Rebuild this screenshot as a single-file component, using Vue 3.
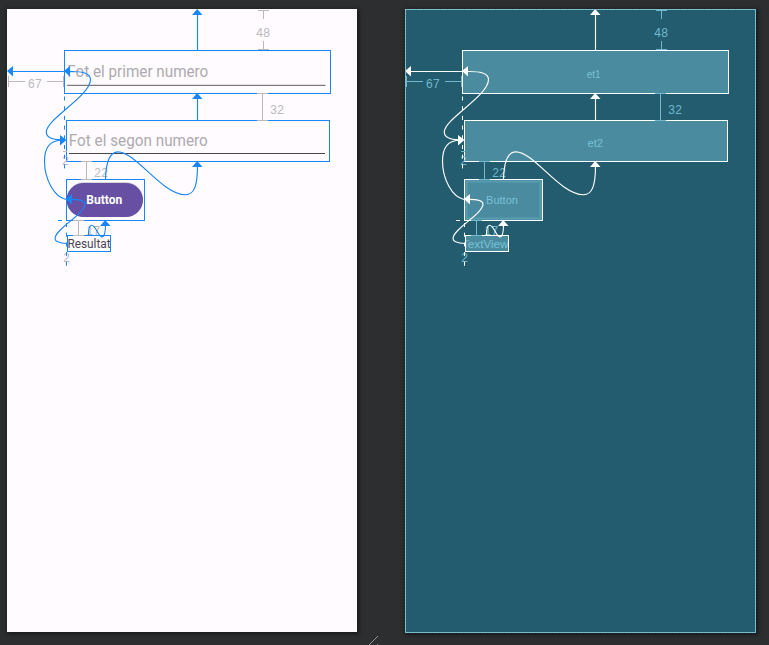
<script setup>
const boards = [
  { kind: 'design', blueprint: false },
  { kind: 'blueprint', blueprint: true },
]

const widgets = [
  { id: 'et1', x: 64, y: 50, w: 266, h: 43, label: 'et1', lx: 188.7, ly: 78, lw: 14 },
  { id: 'et2', x: 66, y: 120, w: 263, h: 41, label: 'et2', lx: 189.5, ly: 147, lw: 15.5 },
  { id: 'button', x: 66, y: 179, w: 78, h: 41, label: 'Button', lx: 88, ly: 204, lw: 32 },
  { id: 'result', x: 67, y: 235, w: 43, h: 16, label: 'TextView', lx: 64, ly: 248, lw: 46.5 },
]

const links = [
  'M197.5 14V50',
  'M197.5 98V120',
  'M12 71.5H64',
  'M69 71.5C82 71.3 90.5 73 90.5 79.5C90.5 96 46.3 119 46.3 132C46.3 137.5 53 139.6 61 139.8',
  'M66 199.5C54 197 44.5 179 44.5 161C44.5 148 50 140.5 61 140.2',
  'M105.5 179C106 160 111 151.8 118 151.8C136 151.8 162 194.7 185.5 194.7C194 194.7 197.5 186 197.5 166',
  'M67 243.5C58 243 55 241.5 55 238.5C55 229 85 214 85 204C85 200 79 199.4 71 199.4',
  'M88.5 235C88.5 229 89 225.2 91.5 225.2C96 225.2 98 236.8 102 236.8C105 236.8 105.5 232 105.5 225',
]

const heads = [
  'M197.2 9L202.5 15H192Z',
  'M197.2 93L202.5 99H192Z',
  'M197.2 161L202.5 167H192Z',
  'M105.2 220L110.5 226H100Z',
  'M7 71L13 66V76.5Z',
  'M64 71L70 66V76.5Z',
  'M66 199L72 194V204.5Z',
  'M66.5 140L60 135V145.5Z',
]

const measures = [
  { d: 'M258 10.5H269M263.5 10V19M263.5 41V50M258 49.5H269', text: '48', x: 256.3, y: 37 },
  { d: 'M257 93.5H268M262.5 94V120M257 120.5H268', text: '32', x: 270.3, y: 114 },
  { d: 'M8.5 76V87M8 81.5H25M47 81.5H64M63.5 76V87', text: '67', x: 28, y: 88 },
  { d: 'M81 161.5H92M86.5 162V179M81 179.5H92', text: '22', x: 94.3, y: 177 },
  { d: 'M73 220.5H84M78.5 221V235M73 235.5H84', text: '17', x: 86.5, y: 235 },
  { d: 'M63 151.5H67', text: '2', x: 62.3, y: 165 },
  { d: '', text: '2', x: 63.3, y: 262 },
]
</script>

<template>
  <main class="editor">
    <section v-for="b in boards" :key="b.kind" class="board" :class="b.kind">
      <svg class="surface" viewBox="7 9 350 623" width="350" height="623">
        <defs>
          <clipPath :id="b.kind + '-result'"><rect x="68" y="235" width="42" height="17" /></clipPath>
        </defs>

        <g v-if="!b.blueprint">
          <text class="hint" x="67.3" y="77" textLength="141" lengthAdjust="spacingAndGlyphs">Fot el primer numero</text>
          <path class="underline faint" d="M67 84.5H325.5" />
          <path class="underline soft" d="M67 85.5H325.5" />
          <text class="hint" x="68.8" y="146" textLength="139" lengthAdjust="spacingAndGlyphs">Fot el segon numero</text>
          <path class="underline" d="M69 153.5H325" />
          <rect class="pill-shade" x="67" y="182" width="76" height="35" rx="17.5" />
          <rect class="pill" x="66.5" y="183" width="76.5" height="34" rx="17" />
          <text class="pill-text" x="86.2" y="204" textLength="36" lengthAdjust="spacingAndGlyphs">Button</text>
          <text class="result" x="67.4" y="248" textLength="43.2" lengthAdjust="spacingAndGlyphs">Resultat</text>
        </g>

        <template v-if="b.blueprint">
          <rect v-for="w in widgets" :key="w.id" class="fill" :x="w.x" :y="w.y" :width="w.w" :height="w.h" />
          <rect class="inset" x="68.5" y="181.5" width="74" height="37" />
        </template>

        <rect
          v-for="w in widgets"
          :key="w.id"
          class="outline"
          :x="w.x + 0.5"
          :y="w.y + 0.5"
          :width="w.w"
          :height="w.h"
        />

        <g v-for="(m, i) in measures" :key="i">
          <path class="measure" :d="m.d" />
          <text class="number" :x="m.x" :y="m.y">{{ m.text }}</text>
        </g>

        <template v-if="b.blueprint">
          <rect class="fill" x="68" y="236" width="42" height="15" />
          <g v-for="w in widgets" :key="w.id" :clip-path="w.id === 'result' ? 'url(#blueprint-result)' : null">
            <text class="name" :x="w.lx" :y="w.ly" :textLength="w.lw" lengthAdjust="spacingAndGlyphs">{{ w.label }}</text>
          </g>
        </template>

        <path class="guide" d="M64.5 96.5V171" />
        <path class="guide" d="M66.5 223V268M58 220.5H62" />
        <path v-for="d in links" :key="d" class="link" :d="d" />
        <path v-for="d in heads" :key="d" class="head" :d="d" />
        <rect v-if="b.blueprint" class="frame-base" x="7.5" y="9.5" width="350" height="623" />
        <rect v-if="b.blueprint" class="frame" x="7.5" y="9.5" width="350" height="623" />
      </svg>
    </section>
    <svg class="grip" width="10" height="10" viewBox="0 0 10 10">
      <path d="M0 10L9 1M8 10L9 9" />
    </svg>
  </main>
</template>

<style>
body {
  margin: 0;
  background: #2d2e30;
}
</style>

<style scoped>
.editor {
  position: relative;
  box-sizing: border-box;
  display: flex;
  align-items: flex-start;
  gap: 48px;
  width: 769px;
  height: 645px;
  padding: 9px 7px;
  overflow: hidden;
  background: #2d2e30;
}
.board {
  flex: none;
  width: 350px;
  height: 623px;
  box-shadow: 1px 1px 4px 1px #18191a;
}
.design {
  --line: #1886f7;
  --measure: #bbb9bc;
  background: #fffbff;
}
.blueprint {
  --line: #ffffff;
  --measure: #70b8ce;
  width: 351px;
  height: 624px;
  background: #235c6e;
}
.surface {
  display: block;
  overflow: visible;
}
.outline,
.link,
.measure,
.guide {
  fill: none;
  stroke: var(--line);
  stroke-width: 1;
}
.link {
  stroke-width: 1.15;
}
.measure {
  stroke: var(--measure);
}
.guide {
  stroke-dasharray: 4 5.7;
}
.head {
  fill: var(--line);
}
.number {
  font: 12px "Liberation Sans", sans-serif;
  letter-spacing: 0.3px;
  fill: var(--measure);
}
.hint {
  font: 400 16px Roboto, sans-serif;
  fill: #aeaaae;
}
.underline {
  stroke: #49454c;
}
.underline.soft {
  stroke: #7d777b;
}
.underline.faint {
  stroke: #e2dee2;
}
.pill-shade {
  fill: #d9d5db;
}
.pill {
  fill: #6750a4;
}
.pill-text {
  font: 700 12px Roboto, sans-serif;
  fill: #fff;
}
.result {
  font: 12px Roboto, sans-serif;
  fill: #49454f;
}
.fill {
  fill: #4a8b9f;
}
.inset {
  fill: none;
  stroke: #599db1;
  stroke-width: 2;
}
.name {
  font: 11.5px "Liberation Sans", sans-serif;
  fill: #78c1d5;
}
.frame-base {
  fill: none;
  stroke: #5fa5b9;
}
.frame {
  fill: none;
  stroke: #86cbdd;
  stroke-dasharray: 2 1;
}
.grip {
  position: absolute;
  left: 369px;
  bottom: 0;
}
.grip path {
  fill: none;
  stroke: #929394;
}
</style>
